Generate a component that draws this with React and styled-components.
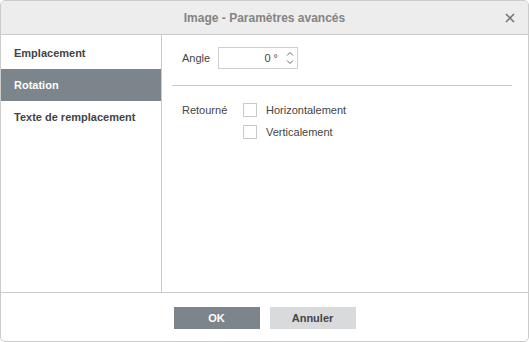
import React from 'react';
import styled, {createGlobalStyle} from 'styled-components';

const Global = createGlobalStyle`
  html, body {
    margin: 0;
    padding: 0;
    background: #fff;
  }
  body {
    font-family: Arial, "Liberation Sans", Helvetica, sans-serif;
    font-size: 11px;
    color: #444;
  }
`;

const Dialog = styled.div`
  box-sizing: border-box;
  width: 529px;
  height: 342px;
  border: 1px solid #cbcbcb;
  border-radius: 5px;
  display: flex;
  flex-direction: column;
  overflow: hidden;
  background: #fff;
`;

const Header = styled.div`
  position: relative;
  height: 33px;
  flex: none;
  background: #ededed;
  border-bottom: 1px solid #cbcbcb;
  display: flex;
  align-items: center;
  justify-content: center;
`;

const Title = styled.div`
  font-size: 12px;
  font-weight: bold;
  color: #848484;
  margin-top: 1px;
`;

const Close = styled.div`
  position: absolute;
  right: 13px;
  top: 12px;
  width: 10px;
  height: 10px;
  cursor: pointer;
`;

const Body = styled.div`
  flex: 1;
  display: flex;
  min-height: 0;
`;

const Sidebar = styled.div`
  width: 160px;
  flex: none;
  border-right: 1px solid #cbcbcb;
  padding-top: 2px;
  display: flex;
  flex-direction: column;
`;

const NavItem = styled.div`
  height: 32px;
  display: flex;
  align-items: center;
  padding-left: 13px;
  font-weight: bold;
  font-size: 11px;
  color: ${p => (p.active ? '#fff' : '#444')};
  background: ${p => (p.active ? '#7d858c' : 'transparent')};
`;

const Content = styled.div`
  flex: 1;
  padding: 12px 16px 0 10px;
  display: flex;
  flex-direction: column;
`;

const Row = styled.div`
  display: flex;
  align-items: ${p => (p.top ? 'flex-start' : 'center')};
  padding-left: 10px;
`;

const Label = styled.div`
  width: ${p => p.w}px;
  flex: none;
  padding-top: ${p => (p.top ? 1 : 0)}px;
`;

const SpinBox = styled.div`
  box-sizing: border-box;
  width: 80px;
  height: 22px;
  border: 1px solid #cfcfcf;
  display: flex;
  align-items: center;
  justify-content: flex-end;
  padding-right: 3px;
`;

const SpinValue = styled.span`
  margin-right: 8px;
  color: #444;
`;

const Arrows = styled.div`
  display: flex;
  flex-direction: column;
  gap: 4px;
  width: 8px;
`;

const Separator = styled.div`
  height: 1px;
  background: #cbcbcb;
  margin: 16px 0 17px;
`;

const CheckList = styled.div`
  display: flex;
  flex-direction: column;
  gap: 8px;
`;

const CheckRow = styled.div`
  display: flex;
  align-items: center;
`;

const Box = styled.div`
  box-sizing: border-box;
  width: 14px;
  height: 14px;
  border: 1px solid #c8c8c8;
  margin-right: 9px;
  background: #fff;
`;

const Footer = styled.div`
  height: 49px;
  flex: none;
  border-top: 1px solid #cbcbcb;
  display: flex;
  justify-content: center;
  align-items: flex-start;
  padding-top: 14px;
  box-sizing: border-box;
  gap: 10px;
`;

const Button = styled.div`
  width: 86px;
  height: 22px;
  display: flex;
  align-items: center;
  justify-content: center;
  font-weight: bold;
  font-size: 11px;
  color: ${p => (p.primary ? '#fff' : '#444')};
  background: ${p => (p.primary ? '#7d858c' : '#d8dadc')};
  cursor: pointer;
`;

const Chevron = ({up}) => (
  <svg width="8" height="5" viewBox="0 0 8 5">
    <path
      d={up ? 'M1 4.5 L4 1.5 L7 4.5' : 'M1 0.5 L4 3.5 L7 0.5'}
      fill="none"
      stroke="#666"
      strokeWidth="1"
    />
  </svg>
);

export default function App() {
  return (
    <>
      <Global />
      <Dialog>
        <Header>
          <Title>Image - Paramètres avancés</Title>
          <Close>
            <svg width="10" height="10" viewBox="0 0 10 10">
              <path d="M1 1 L9 9 M9 1 L1 9" stroke="#6f6f6f" strokeWidth="1.5" />
            </svg>
          </Close>
        </Header>
        <Body>
          <Sidebar>
            <NavItem>Emplacement</NavItem>
            <NavItem active>Rotation</NavItem>
            <NavItem>Texte de remplacement</NavItem>
          </Sidebar>
          <Content>
            <Row>
              <Label w={36}>Angle</Label>
              <SpinBox>
                <SpinValue>0 °</SpinValue>
                <Arrows>
                  <Chevron up />
                  <Chevron />
                </Arrows>
              </SpinBox>
            </Row>
            <Separator />
            <Row top>
              <Label w={61} top>Retourné</Label>
              <CheckList>
                <CheckRow>
                  <Box />
                  Horizontalement
                </CheckRow>
                <CheckRow>
                  <Box />
                  Verticalement
                </CheckRow>
              </CheckList>
            </Row>
          </Content>
        </Body>
        <Footer>
          <Button primary>OK</Button>
          <Button>Annuler</Button>
        </Footer>
      </Dialog>
    </>
  );
}
